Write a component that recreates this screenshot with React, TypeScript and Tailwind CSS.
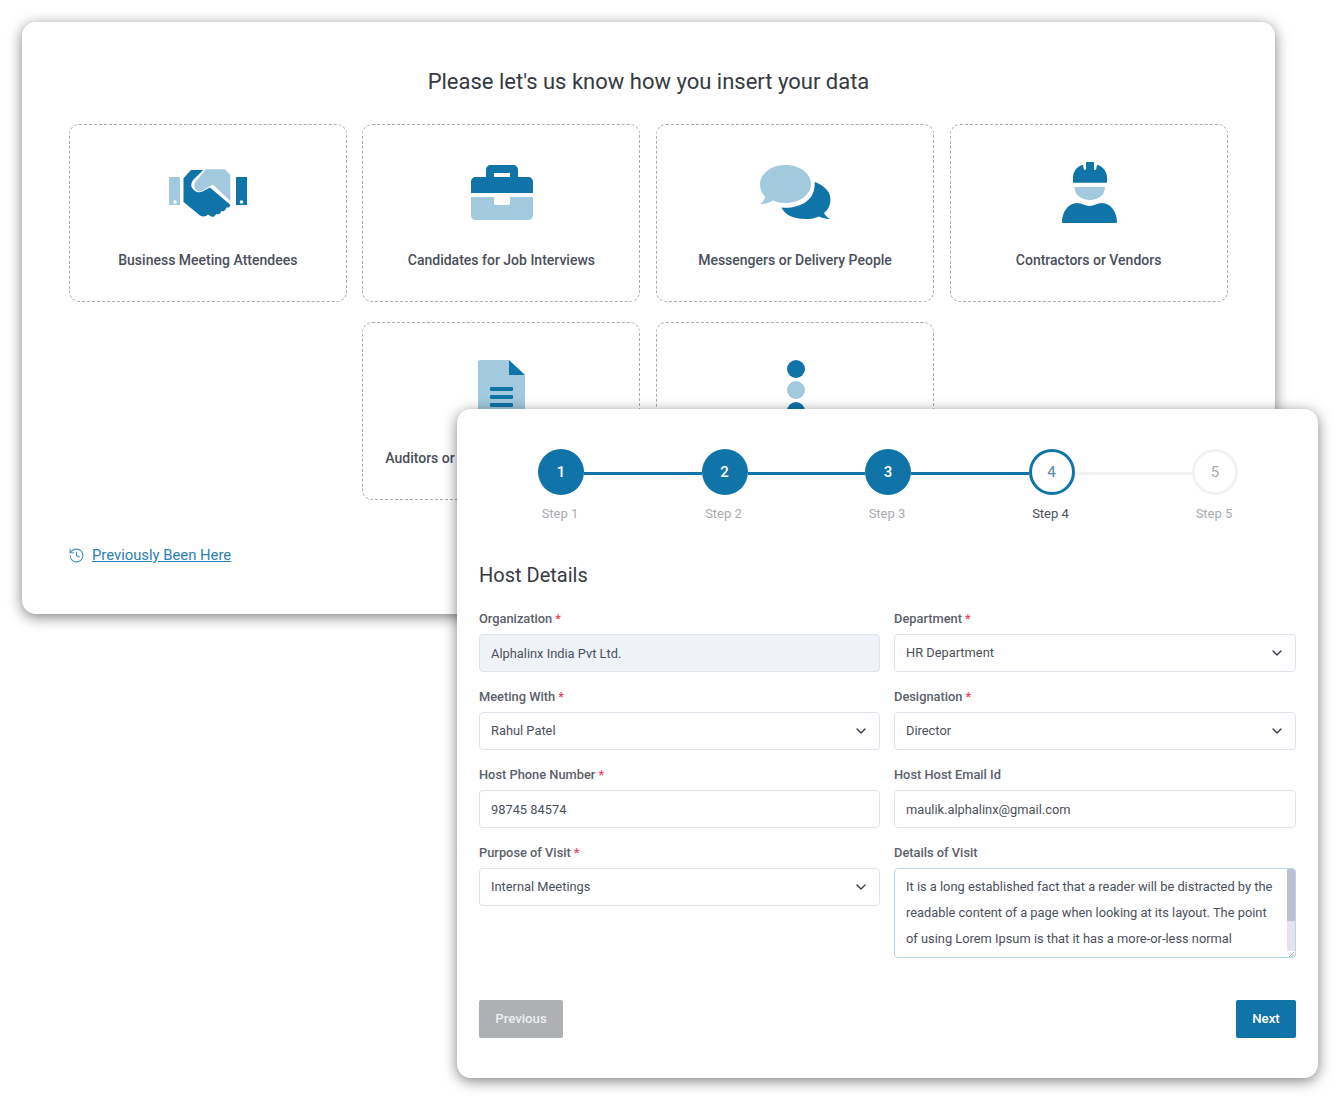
import { ChevronDown, History } from "lucide-react";
import type { ReactNode } from "react";

const BLUE = "#1074a8";
const LIGHT = "#a2c9dd";

function HandshakeIcon() {
  return (
    <svg width="78" height="50" viewBox="0 0 78 50" aria-hidden="true">
      <path fill={LIGHT} d="M0 9h11v28H0z" />
      <path fill={BLUE} d="M67 9h11v28H67z" />
      <circle cx="6" cy="34" r="1.8" fill="#fff" />
      <circle cx="72.500" cy="34" r="1.800" fill="#fff" />
      <path
        fill={BLUE}
        d="M22 2H34.300L25 11C22 14 21.500 18 23.500 20.500L26 23C28 24.500 31 24.800 33.500 23.500L41 19.500L61.500 37C61 39 59 40 57 39.500C57.500 41.500 55 44 52 43C52 45.500 50 47 47 46C46 48.500 44 49.800 41.500 48L39 46.500C37 48.800 34 49 31 47.500L14.500 34V10.300Z"
      />
      <path
        fill={LIGHT}
        d="M37 1.300H56L61.300 7V33L46 18.500C45 17 43.500 16.500 42 17.500L33 23C31 24 29 23.500 27.500 22L26.500 21C24.500 18.500 25 15 27.500 12.500Z"
      />
    </svg>
  );
}

function BriefcaseIcon() {
  return (
    <svg width="62" height="55" viewBox="0 0 62 55" aria-hidden="true">
      <path
        fill={BLUE}
        d="M15 12V5c0-3 2-5 5-5h22c3 0 5 2 5 5v7h10c3 0 5 2 5 5v11H0V17c0-3 2-5 5-5Zm8 0h16V8H23Z"
      />
      <path
        fill={LIGHT}
        d="M0 32h23v6c0 1 1 2 2 2h12c1 0 2-1 2-2v-6h23v18c0 3-2 5-5 5H5c-3 0-5-2-5-5Z"
      />
    </svg>
  );
}

function ChatIcon() {
  return (
    <svg width="71" height="55" viewBox="0 0 71 55" aria-hidden="true">
      <path
        fill={LIGHT}
        d="M25.500 0C39.600 0 51 8.500 51 19s-11.400 19-25.500 19c-4.500 0-9-.8-12.800-2.500C9 38 4.500 39.300 0 39c2.500-1.500 4.500-4 5.200-7C1.900 28.500 0 24 0 19 0 8.500 11.400 0 25.500 0Z"
      />
      <path
        fill={BLUE}
        d="M54.600 17C64 20 71 27 70.400 35c0 5-2.400 10-6.400 13 1 2 4 5 6.400 6-4.400 0-8.400-1-11.400-2.500-7 3.500-21 3.500-29-.5-4-2-7-5-8.500-8.500C36 44 56 38 54.600 17Z"
      />
    </svg>
  );
}

function WorkerIcon() {
  return (
    <svg width="55" height="62" viewBox="0 0 55 62" aria-hidden="true">
      <path
        fill={BLUE}
        d="M11 20.700V15C11.500 9 15 4.500 21 2.800L22 8 24 7.500V1C24 .4 24.400 0 25 0H31C31.600 0 32 .4 32 1V7.500L34 8 35 2.800C41 4.500 44.500 9 45 15V20.700Z"
      />
      <path fill={LIGHT} d="M12.500 25H43C43 33 36 38 27.800 38S12.500 33 12.500 25Z" />
      <path
        fill={BLUE}
        d="M0 60C0 50 6 41.500 15 41 20 41 23 44 27.500 44S35 41 40 41C49 41.500 55 50 55 60 55 60.600 54.600 61 54 61H1C.4 61 0 60.600 0 60Z"
      />
    </svg>
  );
}

function DocumentIcon() {
  return (
    <svg width="47" height="62" viewBox="0 0 47 62" aria-hidden="true">
      <path fill={LIGHT} d="M2 0h29v15h16v45c0 1-1 2-2 2H2c-1 0-2-1-2-2V2C0 1 1 0 2 0Z" />
      <path fill={BLUE} d="M31 0l16 15H31Z" />
      <rect x="12" y="27" width="23" height="4" rx="1" fill={BLUE} />
      <rect x="12" y="35" width="23" height="4" rx="1" fill={BLUE} />
      <rect x="12" y="43" width="23" height="4" rx="1" fill={BLUE} />
    </svg>
  );
}

function DotsIcon() {
  return (
    <svg width="18" height="61" viewBox="0 0 18 61" aria-hidden="true">
      <circle cx="9" cy="9" r="9" fill={BLUE} />
      <circle cx="9" cy="30" r="9" fill={LIGHT} />
      <circle cx="9" cy="51" r="9" fill={BLUE} />
    </svg>
  );
}

const visitorTypes: { label: string; icon: ReactNode; iconTop: string }[] = [
  { label: "Business Meeting Attendees", icon: <HandshakeIcon />, iconTop: "pt-[43px]" },
  { label: "Candidates for Job Interviews", icon: <BriefcaseIcon />, iconTop: "pt-[40px] pl-[1px]" },
  { label: "Messengers or Delivery People", icon: <ChatIcon />, iconTop: "pt-[40px] pl-[1px]" },
  { label: "Contractors or Vendors", icon: <WorkerIcon />, iconTop: "pt-[37px] pl-[1px]" },
  { label: "Auditors or Government Accountants", icon: <DocumentIcon />, iconTop: "pt-[37px] pl-[1px]" },
  { label: "Others", icon: <DotsIcon />, iconTop: "pt-[37px] pl-[1px]" },
];

function VisitorCard({ label, icon, iconTop }: { label: string; icon: ReactNode; iconTop: string }) {
  return (
    <div className="relative h-[178px] w-[278px] rounded-[10px] border border-dashed border-[#a9acb2]">
      <div className={`flex justify-center ${iconTop}`}>{icon}</div>
      <div className="absolute inset-x-0 top-[125px] text-center text-[14px] leading-[20px] font-medium text-[#4a4f5c]">
        {label}
      </div>
    </div>
  );
}

function FieldLabel({ children, required }: { children: string; required?: boolean }) {
  return (
    <div className="mb-[6px] h-[20px] pt-[1px] text-[12.850px] leading-[20px] font-medium text-[#5b606c]">
      {children}
      {required ? <span className="ml-[3px] text-[#f0415a]">*</span> : null}
    </div>
  );
}

function TextField({ label, value, required, disabled }: { label: string; value: string; required?: boolean; disabled?: boolean }) {
  return (
    <div>
      <FieldLabel required={required}>{label}</FieldLabel>
      <div
        className={`flex h-[38px] items-center rounded-[4px] border border-[#dfe4ec] px-[11px] pt-[2px] text-[12.850px] text-[#4a4f5c] ${disabled ? "bg-[#eff3f8]" : "bg-white"}`}
      >
        {value}
      </div>
    </div>
  );
}

function SelectField({ label, value, required }: { label: string; value: string; required?: boolean }) {
  return (
    <div>
      <FieldLabel required={required}>{label}</FieldLabel>
      <div className="flex h-[38px] items-center justify-between rounded-[4px] border border-[#dfe4ec] bg-white pr-[10px] pl-[11px] text-[12.850px] text-[#4a4f5c]">
        {value}
        <ChevronDown size={16} strokeWidth={2} className="text-[#343a46]" />
      </div>
    </div>
  );
}

function Stepper() {
  const steps = [1, 2, 3, 4, 5];
  return (
    <div className="ml-[59px] w-[700px]">
      <div className="flex items-center">
        {steps.map((step) => (
          <div key={step} className={`flex items-center ${step < 5 ? "flex-1" : ""}`}>
            <div
              className={`flex h-[46px] w-[46px] shrink-0 items-center justify-center rounded-full text-[15px] ${
                step < 4
                  ? "bg-[#1074a8] font-medium text-white"
                  : step === 4
                    ? "border-[3px] border-[#1074a8] bg-white text-[#4d86ad]"
                    : "border-[3px] border-[#f2f2f3] bg-white text-[#a9abaf]"
              }`}
            >
              {step}
            </div>
            {step < 5 ? <div className={`mt-[2px] h-[3px] flex-1 ${step < 4 ? "bg-[#1074a8]" : "bg-[#f2f2f3]"}`} /> : null}
          </div>
        ))}
      </div>
      <div className="mt-[10px] mr-[1px] -ml-[1px] flex justify-between">
        {steps.map((step) => (
          <div
            key={step}
            className={`w-[46px] text-center text-[13px] leading-[18px] whitespace-nowrap ${step === 4 ? "text-[#4a4f5c]" : "text-[#a9abaf]"}`}
          >
            Step {step}
          </div>
        ))}
      </div>
    </div>
  );
}

export default function App() {
  return (
    <div className="relative h-[1100px] w-[1340px] overflow-hidden bg-white font-['Roboto',sans-serif]">
      <div className="absolute top-[22px] left-[22px] h-[592px] w-[1253px] rounded-[14px] bg-white px-[47px] pt-[45px] shadow-[0_3px_14px_rgba(0,0,0,0.5)]">
        <h1 className="text-center text-[22px] leading-[30px] font-normal text-[#363a42]">
          Please let's us know how you insert your data
        </h1>
        <div className="mt-[27px] -ml-[0.300px] flex w-[1159px] flex-wrap justify-center gap-x-[15.600px] gap-y-[20px]">
          {visitorTypes.map((type) => (
            <VisitorCard key={type.label} {...type} />
          ))}
        </div>
        <div className="mt-[45px] -ml-px flex items-center gap-[7px]">
          <History size={17} strokeWidth={1.500} className="text-[#4a90b8]" />
          <a href="#" className="text-[14.800px] leading-[20px] text-[#2a80b0] underline">
            Previously Been Here
          </a>
        </div>
      </div>

      <div className="absolute top-[409px] left-[457px] h-[669px] w-[861px] rounded-[14px] bg-white px-[22px] pt-[40px] shadow-[0_3px_14px_rgba(0,0,0,0.5)]">
        <Stepper />
        <h2 className="mt-[38px] mb-[19px] text-[20px] leading-[28px] font-normal text-[#363a42]">Host Details</h2>
        <div className="grid grid-cols-[401px_402px] gap-x-[14px] gap-y-[14px]">
          <TextField label="Organization" value="Alphalinx India Pvt Ltd." required disabled />
          <SelectField label="Department" value="HR Department" required />
          <SelectField label="Meeting With" value="Rahul Patel" required />
          <SelectField label="Designation" value="Director" required />
          <TextField label="Host Phone Number" value="98745 84574" required />
          <TextField label="Host Host Email Id" value="maulik.alphalinx@gmail.com" />
          <SelectField label="Purpose of Visit" value="Internal Meetings" required />
          <div>
            <FieldLabel>Details of Visit</FieldLabel>
            <div className="relative h-[90px] overflow-hidden rounded-[4px] border border-[#b7d6e8] bg-white pt-[5px] pr-[16px] pl-[11px] text-[12.850px] leading-[25.800px] text-[#4a4f5c]">
              <div className="whitespace-nowrap">It is a long established fact that a reader will be distracted by the</div>
              <div className="whitespace-nowrap">readable content of a page when looking at its layout. The point</div>
              <div className="whitespace-nowrap">of using Lorem Ipsum is that it has a more-or-less normal</div>
              <div className="absolute top-0 right-0 bottom-[6px] w-[8px] bg-[#e6e2ee]">
                <div className="h-[52px] bg-[#bfbfd3]" />
              </div>
              <svg className="absolute right-0 bottom-0" width="7" height="6" viewBox="0 0 7 6" aria-hidden="true">
                <path d="M6 1 1 6M6 3.500 3.500 6" stroke="#8a8f98" strokeWidth="0.800" />
              </svg>
            </div>
          </div>
        </div>
        <div className="mt-[42px] flex justify-between">
          <button type="button" className="h-[38px] w-[84px] rounded-[2px] bg-[#aeb0b3] pb-[1px] text-[13.200px] font-medium text-[#eceded]">
            Previous
          </button>
          <button type="button" className="h-[38px] w-[60px] rounded-[2px] bg-[#1074a8] pb-[1px] text-[13.200px] font-medium text-white">
            Next
          </button>
        </div>
      </div>
    </div>
  );
}
